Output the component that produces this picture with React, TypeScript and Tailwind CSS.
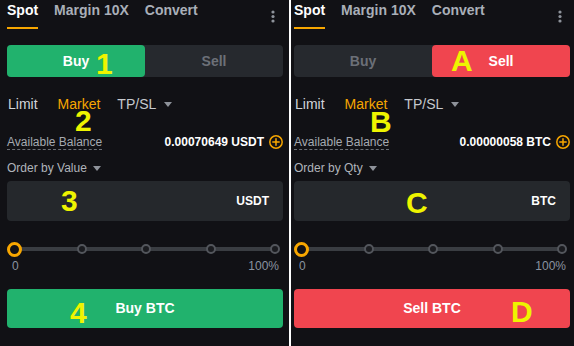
type Side = 'buy' | 'sell'

type Mark = { text: string; className: string }

function Caret() {
  return (
    <svg width="8" height="5" viewBox="0 0 8 5" className="fill-[#8e929a]">
      <path d="M0 0h8L4 5z" />
    </svg>
  )
}

function Kebab() {
  return (
    <svg width="4" height="14" viewBox="0 0 4 14" className="fill-[#8e939b]">
      <circle cx="2" cy="2" r="1.6" />
      <circle cx="2" cy="6.5" r="1.6" />
      <circle cx="2" cy="11" r="1.6" />
    </svg>
  )
}

function PlusCircle() {
  return (
    <svg
      width="14"
      height="14"
      viewBox="0 0 14 14"
      fill="none"
      stroke="#f7a600"
      strokeWidth={1.5}
    >
      <circle cx="7" cy="7" r="6.2" />
      <path d="M7 3.8v6.4M3.8 7h6.4" strokeLinecap="round" />
    </svg>
  )
}

function Panel({
  side,
  balance,
  orderBy,
  unit,
  marks,
  className,
}: {
  side: Side
  balance: string
  orderBy: string
  unit: string
  marks: Mark[]
  className: string
}) {
  const isBuy = side === 'buy'

  return (
    <div className={`relative h-full bg-[#111115] ${className}`}>
      {/* Tabs */}
      <div className="flex items-start justify-between">
        <div className="flex gap-4 text-[14px] font-bold leading-[18px]">
          <div className="h-[29px] border-b-2 border-[#f7a600] pt-[1px] text-white">
            Spot
          </div>
          <div className="h-[29px] pt-[1px] text-[#a9afb8]">Margin 10X</div>
          <div className="h-[29px] pt-[1px] text-[#a9afb8]">Convert</div>
        </div>
        <div className="mr-[8px] mt-[10px]">
          <Kebab />
        </div>
      </div>

      {/* Buy / Sell toggle */}
      <div className="mt-4 flex h-8 rounded-[4px] bg-[#26292e] text-[14px] font-bold">
        <div
          className={`flex flex-1 items-center justify-center rounded-[4px] ${
            isBuy ? 'bg-[#21b26d] text-white' : 'text-[#6c7078]'
          }`}
        >
          Buy
        </div>
        <div
          className={`flex flex-1 items-center justify-center rounded-[4px] ${
            isBuy ? 'text-[#6c7078]' : 'bg-[#f0454f] text-white'
          }`}
        >
          Sell
        </div>
      </div>

      {/* Order types */}
      <div className="mt-[17px] flex items-center pl-[1px] text-[14px] leading-5">
        <span className="text-[#d2d5da]">Limit</span>
        <span className="ml-[20px] text-[#f7a600]">Market</span>
        <span className="ml-[17px] text-[#c6c9ce]">TP/SL</span>
        <span className="ml-[8px]">
          <Caret />
        </span>
      </div>

      {/* Balance */}
      <div className="mt-[21px] flex items-start justify-between text-[12px] leading-[14px]">
        <span className="border-b border-dashed border-[#6b6f76] text-[#a6aab1]">
          Available Balance
        </span>
        <div className="flex items-center gap-[5px]">
          <span className="font-bold text-white">{balance}</span>
          <PlusCircle />
        </div>
      </div>

      {/* Order by */}
      <div className="mt-[11px] flex items-center gap-[6px] text-[12px] leading-[14px] text-[#b0b4bb]">
        <span>{orderBy}</span>
        <Caret />
      </div>

      {/* Amount input */}
      <div className="mt-[6px] flex h-10 items-center justify-end rounded-[4px] bg-[#25282c] pr-[14px] text-[12px] font-bold text-white">
        {unit}
      </div>

      {/* Slider */}
      <div className="relative mr-[3px] mt-[20px] h-4">
        <div className="absolute left-[14px] right-[4px] top-[6px] h-1 bg-[#3a3d42]" />
        <div className="relative flex h-4 items-center justify-between">
          <div className="h-[15px] w-[15px] rounded-full border-[3px] border-[#f7a600] bg-[#111115]" />
          <div className="h-[10px] w-[10px] rounded-full border-2 border-[#53565c] bg-[#1a1b1f]" />
          <div className="h-[10px] w-[10px] rounded-full border-2 border-[#53565c] bg-[#1a1b1f]" />
          <div className="h-[10px] w-[10px] rounded-full border-2 border-[#53565c] bg-[#1a1b1f]" />
          <div className="h-[10px] w-[10px] rounded-full border-2 border-[#53565c] bg-[#1a1b1f]" />
        </div>
      </div>
      <div className="mt-[2px] flex justify-between pl-[5px] pr-[4px] text-[12px] leading-[14px] text-[#8a93a0]">
        <span>0</span>
        <span>100%</span>
      </div>

      {/* Submit */}
      <div
        className={`mt-4 flex h-[39px] items-center justify-center rounded-[4px] text-[14px] font-bold text-white ${
          isBuy ? 'bg-[#21b26d]' : 'bg-[#f0454f]'
        }`}
      >
        {isBuy ? 'Buy BTC' : 'Sell BTC'}
      </div>

      {/* Annotations */}
      {marks.map((m) => (
        <span
          key={m.text}
          className={`absolute text-[30px] font-bold leading-[30px] text-[#eef400] ${m.className}`}
        >
          {m.text}
        </span>
      ))}
    </div>
  )
}

export default function App() {
  return (
    <div className="flex h-[346px] w-[574px] overflow-hidden bg-white font-['Liberation_Sans',Arial,sans-serif]">
      <Panel
        side="buy"
        balance="0.00070649 USDT"
        orderBy="Order by Value"
        unit="USDT"
        className="w-[289px] pl-[7px] pr-[6px]"
        marks={[
          { text: '1', className: 'left-[96px] top-[49px]' },
          { text: '2', className: 'left-[75px] top-[106px]' },
          { text: '3', className: 'left-[61px] top-[186px]' },
          { text: '4', className: 'left-[70px] top-[298px]' },
        ]}
      />
      <div className="w-[2px] bg-white" />
      <Panel
        side="sell"
        balance="0.00000058 BTC"
        orderBy="Order by Qty"
        unit="BTC"
        className="flex-1 pl-[3px] pr-[4px]"
        marks={[
          { text: 'A', className: 'left-[160px] top-[46px]' },
          { text: 'B', className: 'left-[79px] top-[107px]' },
          { text: 'C', className: 'left-[115px] top-[188px]' },
          { text: 'D', className: 'left-[220px] top-[297px]' },
        ]}
      />
    </div>
  )
}
